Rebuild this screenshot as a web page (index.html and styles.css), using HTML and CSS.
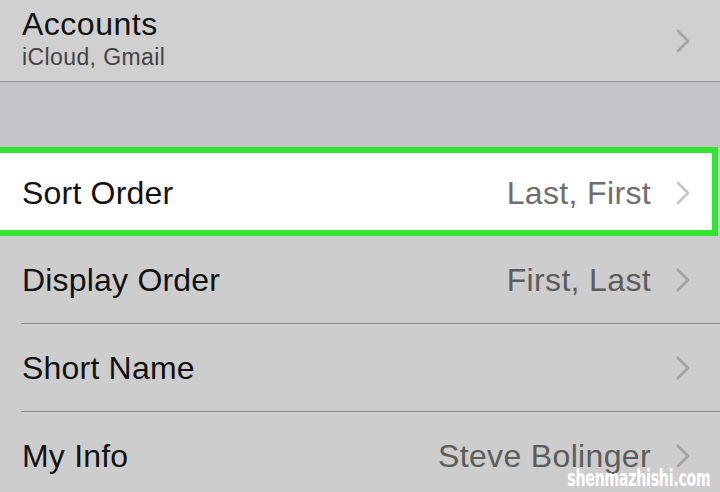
FILE: index.html
```html
<!DOCTYPE html>
<html>
<head>
<meta charset="utf-8">
<link rel="stylesheet" href="styles.css">
</head>
<body>
<div class="screen">
  <div class="accounts">
    <div class="acc-text">
      <div class="title">Accounts</div>
      <div class="subtitle">iCloud, Gmail</div>
    </div>
    <svg class="chev" viewBox="0 0 14 24"><path d="M2 2 L12 12 L2 22"/></svg>
  </div>
  <div class="gap"></div>
  <div class="highlight">
    <div class="row white">
      <span class="label">Sort Order</span>
      <span class="value">Last, First</span>
      <svg class="chev" viewBox="0 0 14 24"><path d="M2 2 L12 12 L2 22"/></svg>
    </div>
  </div>
  <div class="list">
    <div class="row sep">
      <span class="label">Display Order</span>
      <span class="value">First, Last</span>
      <svg class="chev" viewBox="0 0 14 24"><path d="M2 2 L12 12 L2 22"/></svg>
    </div>
    <div class="row sep">
      <span class="label">Short Name</span>
      <svg class="chev" viewBox="0 0 14 24"><path d="M2 2 L12 12 L2 22"/></svg>
    </div>
    <div class="row">
      <span class="label">My Info</span>
      <span class="value">Steve Bolinger</span>
      <svg class="chev" viewBox="0 0 14 24"><path d="M2 2 L12 12 L2 22"/></svg>
    </div>
  </div>
  <div class="watermark">shenmazhishi.com</div>
</div>
</body>
</html>
```
FILE: styles.css
```css
html, body {
  margin: 0;
  padding: 0;
}
body {
  width: 720px;
  height: 492px;
  overflow: hidden;
  background: #cdcdcd;
  font-family: "Liberation Sans", Arial, sans-serif;
}
.screen {
  position: relative;
  width: 720px;
  height: 492px;
  display: flex;
  flex-direction: column;
  background: #cdcdcd;
  overflow: hidden;
}
.screen > * {
  flex: none;
}
.accounts {
  height: 81px;
  background: #d0d0d0;
  border-bottom: 1px solid #949494;
  display: flex;
  align-items: center;
  padding: 0 30px 0 22px;
}
.acc-text {
  flex: 1;
  margin-top: -4px;
}
.title {
  font-size: 32px;
  line-height: 36px;
  color: #111;
  letter-spacing: 0.5px;
}
.subtitle {
  font-size: 23px;
  line-height: 30px;
  color: #444;
  letter-spacing: 0.4px;
}
.gap {
  height: 65px;
  background: #c4c4c8;
}
.highlight {
  height: 77px;
  border: 6px solid #2fe52f;
  border-left: 0;
  margin-right: 2px;
  background: #fff;
}
.row {
  display: flex;
  align-items: center;
  padding: 0 30px 0 22px;
  height: 88px;
  box-sizing: border-box;
  position: relative;
}
.highlight .row {
  height: 77px;
  padding-right: 22px;
  padding-top: 3px;
}
.row.sep::after {
  content: "";
  position: absolute;
  left: 21px;
  right: 0;
  bottom: 0;
  height: 1px;
  background: #8c8c8c;
}
.label {
  flex: 1;
  font-size: 32px;
  color: #111;
  letter-spacing: 0.2px;
}
.value {
  font-size: 32px;
  color: #5c5c5c;
  margin-right: 25px;
  letter-spacing: 0.35px;
}
.white .value {
  color: #6e6e6e;
}
.chev {
  width: 14px;
  height: 24px;
  flex: none;
}
.chev path {
  fill: none;
  stroke: #a3a3a3;
  stroke-width: 2.6;
  stroke-linecap: round;
  stroke-linejoin: round;
}
.white .chev path {
  stroke: #c6c6c6;
}
.watermark {
  position: absolute;
  right: 10px;
  bottom: 2px;
  font-family: "DejaVu Sans Condensed", "DejaVu Sans", sans-serif;
  font-stretch: condensed;
  font-weight: bold;
  font-size: 23px;
  line-height: 24px;
  color: #fff;
  letter-spacing: -0.3px;
  transform: scaleX(0.68);
  transform-origin: right center;
}
```
